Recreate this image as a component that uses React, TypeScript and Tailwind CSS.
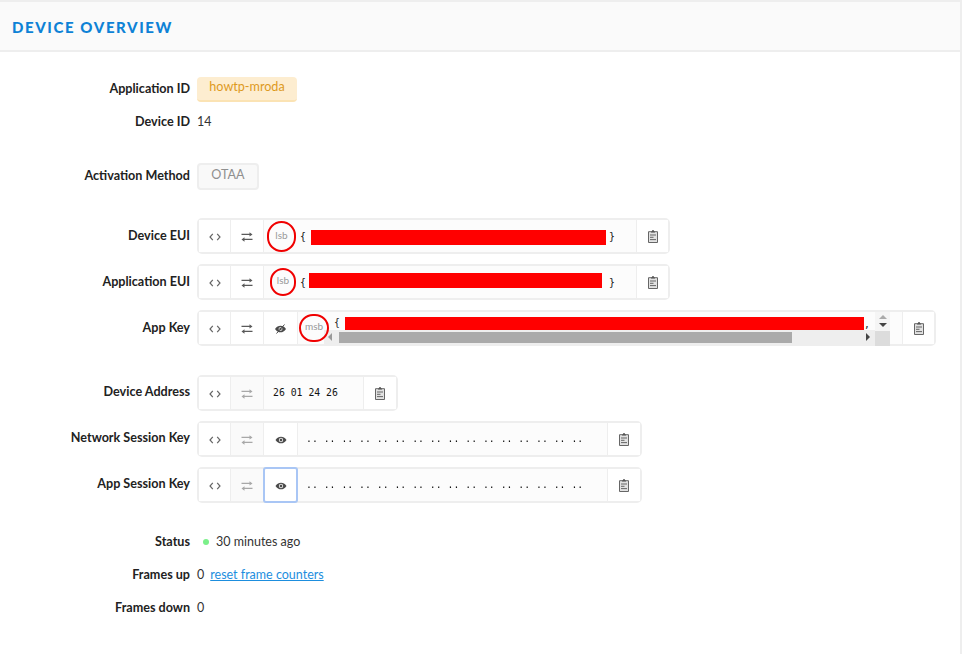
import React from "react";

const Code = () => (
  <svg width="12" height="12" viewBox="0 0 12 12" fill="none" stroke="#666" strokeWidth="1.200"><path d="M3.800 2.800 1 6l2.800 3.200M8.200 2.800 11 6 8.200 9.200" /></svg>
);
const Swap = ({ dim }: { dim?: boolean }) => (
  <svg width="12" height="12" viewBox="0 0 12 12" fill={dim ? "#a8a8a8" : "#5a5a5a"}>
    <path d="M0.500 2.800H8.500V1.200L11.500 3.400 8.500 5.600V4.100H0.500z" />
    <path d="M11.500 7.800H3.500V6.300L.5 8.500 3.500 10.700V9.100h8z" />
  </svg>
);
const Eye = () => (
  <svg width="12" height="12" viewBox="0 0 12 12"><path d="M0.500 6C2 3.500 4 2.700 6 2.700S10 3.500 11.500 6C10 8.500 8 9.300 6 9.300S2 8.500.5 6z" fill="#4a4a4a" /><circle cx="6" cy="6" r="2.200" fill="#ddd" /><circle cx="6" cy="6" r="1.200" fill="#4a4a4a" /></svg>
);
const EyeOff = () => (
  <svg width="13" height="12" viewBox="0 0 12 12"><path d="M0.500 6C2 3.500 4 2.700 6 2.700S10 3.500 11.500 6C10 8.500 8 9.300 6 9.300S2 8.500.5 6z" fill="#4a4a4a" /><circle cx="6" cy="6" r="2" fill="#ccc" /><circle cx="6" cy="6" r="1" fill="#4a4a4a" /><path d="M2 10.500 10 1.500" stroke="#4a4a4a" strokeWidth="1" /></svg>
);
const Clip = () => (
  <svg width="10" height="13" viewBox="0 0 10 13"><path d="M.5 1.700h9v10.800h-9z" fill="#e2e2e2" stroke="#666" strokeWidth="1" /><path d="M3 2.500V1.500H4V.2H6V1.500h1v1z" fill="#555" /><path d="M2 5h6M2 7.300h3.500M2 9.600h6" stroke="#666" strokeWidth="1" /></svg>
);

const Cell = ({ children, dim, focus, w }: { children: React.ReactNode; dim?: boolean; focus?: boolean; w: string }) => (
  <div className={`flex shrink-0 items-center justify-center ${focus ? "relative z-10 -my-[2px] -ml-px h-[36px] w-[35px] rounded-[3px] border-2 border-[#a9c6f5] bg-white pt-[2px]" : `h-full border-r border-[#eeeeee] pt-[2px] ${w} ${dim ? "bg-[#fafafa]" : "bg-white"}`}`}>
    {children}
  </div>
);

const Row = ({ label, up, className, children }: { label: string; up?: boolean; className?: string; children: React.ReactNode }) => (
  <div className={`flex items-center ${className ?? ""}`}>
    <div className={`w-[190px] shrink-0 text-right text-[12.600px] font-bold text-[#222222] ${up ? "pb-[2px]" : ""}`}>{label}</div>
    <div className="ml-[7px] flex min-w-0 flex-1 items-center text-[12.500px] text-[#333333]">{children}</div>
  </div>
);

const Box = ({ width, children }: { width: string; children: React.ReactNode }) => (
  <div className={`relative flex h-[36px] items-center rounded-[5px] border-2 border-[#eeeeee] bg-white ${width}`}>{children}</div>
);

const Copy = ({ w = "w-[32px]" }: { w?: string }) => (
  <div className={`flex h-full ${w} shrink-0 items-center justify-center border-l border-[#eeeeee] bg-white`}><Clip /></div>
);

const Byte = ({ pad, children }: { pad?: string; children: React.ReactNode }) => (
  <div className={`flex h-full min-w-0 flex-1 items-center whitespace-pre bg-[#fcfcfc] font-['DejaVu_Sans_Mono',monospace] text-[9.800px] text-[#111111] ${pad ?? ""}`}>{children}</div>
);

const Ring = ({ text, className }: { text: string; className: string }) => (
  <span className={`absolute flex items-center justify-center rounded-full border-2 border-[#f00000] pb-[3px] text-[10px] text-[#999999] ${className}`}>{text}</span>
);

const Redact = ({ className }: { className: string }) => <span className={`absolute bg-[#ff0000] ${className}`} />;

const DOTS = ".. .. .. .. .. .. .. .. .. .. .. .. .. .. .. ..";

export default function App() {
  return (
    <div className="h-[654px] w-[963px] overflow-hidden bg-white font-['Lato',sans-serif]">
      <div className="h-full w-[962px] border-r-2 border-[#eeeeee]">
        <div className="flex h-[52px] items-center border-y-2 border-[#eeeeee] bg-[#fafafa] pl-[12px] pt-[2px]">
          <h1 className="text-[15px] font-black tracking-[1.600px] text-[#0e82d6]">DEVICE OVERVIEW</h1>
        </div>

        <Row label="Application ID" className="mt-[25px] h-[25px]">
          <span className="flex h-[25px] w-[100px] items-center justify-center rounded-[4px] border-b-2 border-[#fbe3b4] bg-[#fdedd0] pb-[2px] text-[12.600px] text-[#dd9a1e]">howtp-mroda</span>
        </Row>
        <Row label="Device ID" className="mt-[11px] h-[18px]">14</Row>
        <Row label="Activation Method" className="mt-[32px] h-[27px]">
          <span className="flex h-[27px] w-[62px] items-center justify-center rounded-[4px] border-2 border-[#eeeeee] bg-[#f9f9f9] pb-[3px] text-[12.600px] text-[#8f8f8f]">OTAA</span>
        </Row>

        <Row label="Device EUI" className="mt-[28px]">
          <Box width="w-[473px]">
            <Cell w="w-[32px]"><Code /></Cell>
            <Cell w="w-[33px]"><Swap /></Cell>
            <Byte pad="pl-[36px] pt-[2px]">{"{"}<span className="ml-auto mr-[21px]">{"}"}</span></Byte>
            <Copy />
            <Ring text="lsb" className="left-[68px] top-[1px] h-[31px] w-[29px]" />
            <Redact className="left-[112px] top-[10px] h-[15px] w-[295px]" />
          </Box>
        </Row>
        <Row label="Application EUI" className="mt-[10px]">
          <Box width="w-[473px]">
            <Cell w="w-[32px]"><Code /></Cell>
            <Cell w="w-[33px]"><Swap /></Cell>
            <Byte pad="pl-[36px] pt-[2px]">{"{"}<span className="ml-auto mr-[21px]">{"}"}</span></Byte>
            <Copy />
            <Ring text="lsb" className="left-[71px] top-[2px] h-[28px] w-[26px]" />
            <Redact className="left-[110px] top-[7px] h-[15px] w-[293px]" />
          </Box>
        </Row>
        <Row label="App Key" className="mt-[10px]">
          <Box width="w-[739px]">
            <Cell w="w-[32px]"><Code /></Cell>
            <Cell w="w-[33px]"><Swap /></Cell>
            <Cell w="w-[34px]"><EyeOff /></Cell>
            <div className="relative h-full min-w-0 flex-1 bg-[#fcfcfc] font-['DejaVu_Sans_Mono',monospace] text-[9.800px] text-[#222222]">
              <span className="absolute left-[36px] top-[4px]">{"{"}</span>
              <span className="absolute left-[566px] top-[6px]">,</span>
              <div className="absolute bottom-0 left-[26px] flex h-[14px] w-[551px] items-center bg-[#eeeeee]">
                <span className="ml-[4px] h-0 w-0 border-y-[4px] border-r-[4px] border-y-transparent border-r-[#999999]" />
                <span className="ml-[7px] h-[11px] w-[453px] bg-[#aaaaaa]" />
                <span className="ml-auto mr-[5px] h-0 w-0 border-y-[4px] border-l-[4px] border-y-transparent border-l-[#444444]" />
              </div>
              <div className="absolute right-[12px] top-0 flex h-[34px] w-[15px] flex-col items-center bg-[#f5f5f5]">
                <span className="mt-[3px] h-0 w-0 border-x-[4px] border-b-[4px] border-x-transparent border-b-[#aaaaaa]" />
                <span className="mt-[4px] h-0 w-0 border-x-[4px] border-t-[4px] border-x-transparent border-t-[#444444]" />
                <span className="mt-auto h-[15px] w-full bg-[#dcdcdc]" />
              </div>
            </div>
            <Copy />
            <Ring text="msb" className="left-[100px] top-[2px] h-[28px] w-[30px]" />
            <Redact className="left-[146px] top-[5px] h-[13px] w-[519px]" />
          </Box>
        </Row>

        <Row label="Device Address" up className="mt-[29px]">
          <Box width="w-[201px]">
            <Cell w="w-[32px]"><Code /></Cell>
            <Cell w="w-[33px]" dim><Swap dim /></Cell>
            <Byte pad="pl-[9px]"><span className="opacity-[0.99]">26 01 24 26</span></Byte>
            <Copy w="w-[33px]" />
          </Box>
        </Row>
        <Row label="Network Session Key" up className="mt-[10px]">
          <Box width="w-[445px]">
            <Cell w="w-[32px]"><Code /></Cell>
            <Cell w="w-[33px]" dim><Swap dim /></Cell>
            <Cell w="w-[34px]"><Eye /></Cell>
            <Byte pad="pl-[8px]"><span className="opacity-[0.99] [will-change:opacity]">{DOTS}</span></Byte>
            <Copy w="w-[33px]" />
          </Box>
        </Row>
        <Row label="App Session Key" up className="mt-[10px]">
          <Box width="w-[445px]">
            <Cell w="w-[32px]"><Code /></Cell>
            <Cell w="w-[33px]" dim><Swap dim /></Cell>
            <Cell w="w-[34px]" focus><Eye /></Cell>
            <Byte pad="pl-[8px]"><span className="opacity-[0.99] [will-change:opacity]">{DOTS}</span></Byte>
            <Copy w="w-[33px]" />
          </Box>
        </Row>

        <Row label="Status" className="mt-[30px] h-[18px]">
          <span className="ml-[6px] mr-[7px] h-[6px] w-[6px] rounded-full bg-[#7bf08a]" />30 minutes ago
        </Row>
        <Row label="Frames up" className="mt-[15px] h-[18px]">
          0<a className="ml-[6px] text-[#1d8ede] underline">reset frame counters</a>
        </Row>
        <Row label="Frames down" className="mt-[15px] h-[18px]">0</Row>
      </div>
    </div>
  );
}
